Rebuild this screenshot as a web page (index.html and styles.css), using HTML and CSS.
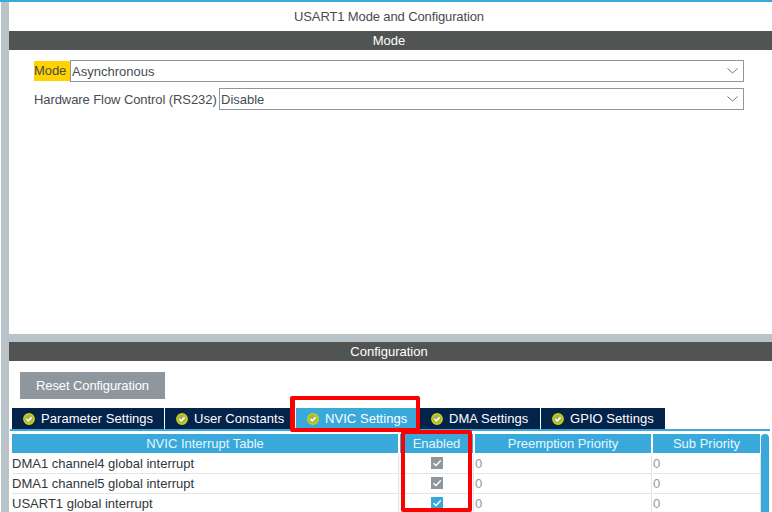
FILE: index.html
```html
<!DOCTYPE html>
<html lang="en">
<head>
    <meta charset="UTF-8">
    <title>USART1 Mode and Configuration</title>
    <link rel="stylesheet" href="styles.css">
</head>
<body>
    <div class="topbar"></div>
    <div class="layout">
        <div class="sidebar"></div>
        <div class="main">
            <div class="mode-panel">
                <div class="title">USART1 Mode and Configuration</div>
                <div class="section-head">Mode</div>
                <div class="form">
                    <div class="form-row">
                        <label class="field-label highlighted">Mode</label>
                        <div class="select">
                            <span>Asynchronous</span>
                            <svg class="chevron" viewBox="0 0 11 6"><path d="M0.5 0.5 L5.5 5 L10.5 0.5"/></svg>
                        </div>
                    </div>
                    <div class="form-row">
                        <label class="field-label">Hardware Flow Control (RS232)</label>
                        <div class="select">
                            <span>Disable</span>
                            <svg class="chevron" viewBox="0 0 11 6"><path d="M0.5 0.5 L5.5 5 L10.5 0.5"/></svg>
                        </div>
                    </div>
                </div>
            </div>

            <div class="divider"></div>

            <div class="config-panel">
                <div class="section-head">Configuration</div>
                <button class="reset-btn">Reset Configuration</button>

                <!-- tabs -->
                <div class="tabs">
                    <div class="tab tab-param"><svg class="ok" viewBox="0 0 12 12"><circle cx="6" cy="6" r="5.2"/><path d="M3.4 6 L5.3 7.8 L8.6 4.4"/></svg>Parameter Settings</div>
                    <div class="tab tab-user"><svg class="ok" viewBox="0 0 12 12"><circle cx="6" cy="6" r="5.2"/><path d="M3.4 6 L5.3 7.8 L8.6 4.4"/></svg>User Constants</div>
                    <div class="tab tab-nvic active"><svg class="ok" viewBox="0 0 12 12"><circle cx="6" cy="6" r="5.2"/><path d="M3.4 6 L5.3 7.8 L8.6 4.4"/></svg>NVIC Settings</div>
                    <div class="tab tab-dma"><svg class="ok" viewBox="0 0 12 12"><circle cx="6" cy="6" r="5.2"/><path d="M3.4 6 L5.3 7.8 L8.6 4.4"/></svg>DMA Settings</div>
                    <div class="tab tab-gpio"><svg class="ok" viewBox="0 0 12 12"><circle cx="6" cy="6" r="5.2"/><path d="M3.4 6 L5.3 7.8 L8.6 4.4"/></svg>GPIO Settings</div>
                </div>
                <div class="tab-line"></div>

                <div class="table-wrap">
                    <div class="nvic-table">
                        <div class="th">NVIC Interrupt Table</div>
                        <div class="th">Enabled</div>
                        <div class="th">Preemption Priority</div>
                        <div class="th">Sub Priority</div>

                        <div class="td">DMA1 channel4 global interrupt</div>
                        <div class="td td-check"><span class="check"><svg viewBox="0 0 12 12"><path d="M2.5 6.2 L5 8.6 L9.8 3.6"/></svg></span></div>
                        <div class="td td-num">0</div>
                        <div class="td td-num">0</div>

                        <div class="td">DMA1 channel5 global interrupt</div>
                        <div class="td td-check"><span class="check"><svg viewBox="0 0 12 12"><path d="M2.5 6.2 L5 8.6 L9.8 3.6"/></svg></span></div>
                        <div class="td td-num">0</div>
                        <div class="td td-num">0</div>

                        <div class="td">USART1 global interrupt</div>
                        <div class="td td-check"><span class="check on"><svg viewBox="0 0 12 12"><path d="M2.5 6.2 L5 8.6 L9.8 3.6"/></svg></span></div>
                        <div class="td td-num">0</div>
                        <div class="td td-num">0</div>
                    </div>
                    <div class="scrollbar"></div>
                </div>
            </div>
        </div>
    </div>

    <!-- red marks drawn over the screenshot -->
    <div class="mark mark-tab"></div>
    <div class="mark mark-col"></div>
</body>
</html>
```

FILE: styles.css
```css
html, body {
    height: 512px;
    overflow: hidden;
}

body {
    font-family: "Liberation Sans", Arial, sans-serif;
    font-size: 13px;
    background-color: #fff;
    color: #474c50;
    margin: 0;
    padding: 0;
    position: relative;
}

.topbar {
    height: 2px;
    background-color: #39a9dc;
}

.layout {
    display: flex;
    height: 510px;
    padding-left: 1px;
}

.sidebar {
    width: 8px;
    flex: none;
    background-color: #b9c4ca;
}

.main {
    flex: 1;
    min-width: 0;
    display: flex;
    flex-direction: column;
}

.mode-panel {
    height: 332px;
    flex: none;
}

.title {
    height: 29px;
    line-height: 29px;
    text-align: center;
    letter-spacing: -0.12px;
    padding-right: 3px;
}

.section-head {
    height: 19px;
    line-height: 19px;
    background-color: #525453;
    color: #fff;
    text-align: center;
    padding-right: 3px;
}

.form {
    padding: 10px 28px 0 25px;
}

.form-row {
    display: flex;
    align-items: center;
    height: 22px;
    margin-bottom: 6px;
}

.field-label {
    flex: none;
    width: 185px;
    white-space: nowrap;
    letter-spacing: -0.08px;
}

.field-label.highlighted {
    background-color: #ffd200;
    height: 20px;
    line-height: 20px;
    width: 36px;
}

.select {
    flex: 1;
    height: 22px;
    box-sizing: border-box;
    border: 1px solid #8f979c;
    display: flex;
    align-items: center;
    justify-content: space-between;
    padding: 0 5px 0 1px;
}

.chevron {
    width: 11px;
    height: 6px;
    fill: none;
    stroke: #6f777b;
    stroke-width: 1;
}

.divider {
    height: 8px;
    flex: none;
    background-color: #b9c4ca;
}

.config-panel {
    flex: 1;
    overflow: hidden;
}

.reset-btn {
    display: block;
    width: 145px;
    height: 27px;
    margin: 11px 0 9px 11px;
    padding: 0;
    border: none;
    background-color: #8f979c;
    color: #fff;
    font: inherit;
    letter-spacing: -0.1px;
}

.tabs {
    display: flex;
    margin-left: 3px;
    height: 21px;
}

.tab {
    display: flex;
    align-items: center;
    box-sizing: border-box;
    background-color: #03234b;
    color: #fff;
    letter-spacing: 0.05px;
    padding-left: 11px;
    border-right: 1px solid #fff;
}

.tab-param { width: 153px; }
.tab-user { width: 131px; }
.tab-nvic { width: 124px; }
.tab-dma { width: 121px; }
.tab-gpio { width: 124px; border-right: none; }

.tab.active {
    background-color: #39a9dc;
}

.ok {
    width: 12px;
    height: 12px;
    flex: none;
    margin-right: 6px;
}

.ok circle {
    fill: #a9b54a;
    stroke: #cfd600;
    stroke-width: 1.4;
}

.ok path {
    fill: none;
    stroke: #fff;
    stroke-width: 1.6;
}

.tab-line {
    height: 2px;
    margin: 0 2px 0 1px;
    background-color: #39a9dc;
}

.table-wrap {
    display: flex;
    align-items: stretch;
    margin: 3px 2px 0 3px;
}

.nvic-table {
    display: grid;
    grid-template-columns: 386px 73px 176px 107px;
    column-gap: 2px;
    flex: none;
}

.th {
    height: 19px;
    line-height: 19px;
    margin-bottom: 1px;
    background-color: #39a9dc;
    color: #e8f6fc;
    text-align: center;
}

.td {
    height: 19px;
    line-height: 19px;
    border-bottom: 1px solid #e4e4e4;
    box-shadow: 1px 0 0 #e4e4e4;
    color: #32373a;
}

.td-num {
    color: #8f97a8;
}

.td-check {
    display: flex;
    align-items: flex-start;
    justify-content: center;
}

.check {
    width: 12px;
    height: 12px;
    margin-top: 3px;
    background-color: #8f979c;
    display: block;
}

.check.on {
    background-color: #39a9dc;
}

.check svg {
    display: block;
    fill: none;
    stroke: #fff;
    stroke-width: 1.4;
}

.scrollbar {
    width: 8px;
    margin-left: 1px;
    background-color: #39a9dc;
    border-radius: 4px 4px 0 0;
}

.mark {
    position: absolute;
    box-sizing: border-box;
    border: 4px solid #fe0000;
    border-radius: 2px;
}

.mark-tab {
    left: 290px;
    top: 396px;
    width: 130px;
    height: 36px;
    border-left-width: 5px;
}

.mark-col {
    left: 401px;
    top: 430px;
    width: 71px;
    height: 82px;
}
```
